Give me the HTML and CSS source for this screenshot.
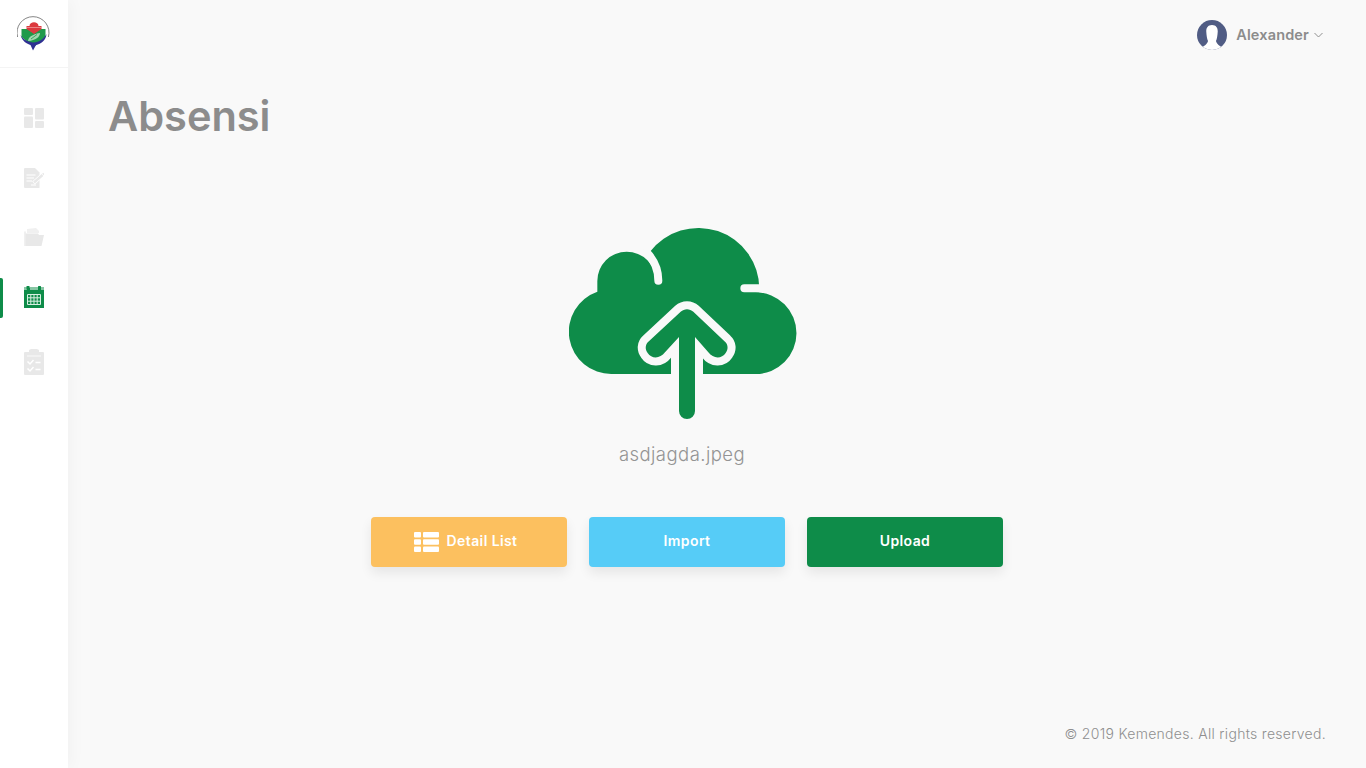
FILE: index.html
```html
<!DOCTYPE html>
<html>

<head>
	<title>Absensi</title>
	<link rel="stylesheet" href="styles.css">
</head>

<body>
	<aside class="sidebar">
		<div class="logo">
			<svg width="34" height="35" viewBox="0 0 34 35">
				<path d="M.6 21A16 16 0 1 1 31.400 21" fill="none" stroke="#666" stroke-width=".8"/>
				<path d="M4.500 13H28.500V21L17 31L4.500 21Z" fill="#1f9a4b"/>
				<path d="M9.500 13V10H12.500C12.500 5 21.500 5 21.500 10H24.500V13L17 18Z" fill="#dc3a3f"/>
				<path d="M9.500 11.500H24.500" stroke="#f3b9ba" stroke-width=".6"/>
				<path d="M11 25C11.500 21 15 18.500 23 17C23 21 18.500 24.500 11 25Z" fill="#dcefdc" opacity=".7"/>
				<path d="M14 23L20 18.500" stroke="#1f9a4b" stroke-width=".8"/>
				<path d="M3.500 19C5 25 10 28 13.500 29L16 34.500L19 29C24 28 29 24.500 29.500 18C27 23 22 26 16.500 26.500C11 26 6 23.500 3.500 19Z" fill="#2f3192"/>
			</svg>
		</div>
		<nav class="menu">
			<a class="menu-item">
				<svg width="20" height="20" viewBox="0 0 20 20" fill="#e8e8e8">
					<rect width="9" height="7" rx="1"/>
					<rect y="8.500" width="9" height="11.500" rx="1"/>
					<rect x="11" width="9" height="11.500" rx="1"/>
					<rect x="11" y="13" width="9" height="7" rx="1"/>
				</svg>
			</a>
			<a class="menu-item">
				<svg width="20" height="20" viewBox="0 0 20 20">
					<path d="M1 0H11L15.500 4.500V20H1A1 1 0 0 1 0 19V1A1 1 0 0 1 1 0Z" fill="#e8e8e8"/>
					<path d="M2.500 7H11.500M2.500 10H10M2.500 13H8M7 17H12" stroke="#fff" stroke-width="1.200"/>
					<path d="M9.500 15L18.500 7" stroke="#fff" stroke-width="4"/>
					<path d="M10 14.500L18.500 7M19 6.500L20 5.500" stroke="#e8e8e8" stroke-width="2.400"/>
				</svg>
			</a>
			<a class="menu-item">
				<svg width="20" height="20" viewBox="0 0 20 20">
					<path d="M3 5V1L12 0L15 3V5Z" fill="#f0f0f0"/>
					<path d="M0 3.500H2V18H0Z" fill="#f0f0f0"/>
					<path d="M1.500 5.500H14L15 7H20L17.500 18H1.500Z" fill="#e8e8e8"/>
				</svg>
			</a>
			<a class="menu-item active">
				<svg width="20" height="24" viewBox="0 0 20 24">
					<path d="M0 1.500H20V22H0Z" fill="#0e8c49"/>
					<path d="M0 3H3M6 3H14M17 3H20" stroke="#fff" stroke-width="1.200"/>
					<rect x="2.500" width="3" height="3.500" rx=".5" fill="#0e8c49"/>
					<rect x="14" width="3" height="3.500" rx=".5" fill="#0e8c49"/>
					<path d="M3.500 8.500H16.500V18.500H3.500ZM3.500 11.800H16.500M3.500 15.200H16.500M6.800 8.500V18.500M10 8.500V18.500M13.200 8.500V18.500" fill="none" stroke="#d8efe2" stroke-width="1"/>
				</svg>
			</a>
			<a class="menu-item">
				<svg width="20" height="34" viewBox="0 -8 20 34">
					<path d="M1 3H5V1L7 0H13L15 1V3H19A1 1 0 0 1 20 4V25A1 1 0 0 1 19 26H1A1 1 0 0 1 0 25V4A1 1 0 0 1 1 3Z" fill="#e8e8e8"/>
					<path d="M3 7H17" stroke="#fff" stroke-width=".8"/>
					<path d="M3.500 12.500L6 15L9.500 11M3.500 19.500L6 22L9.500 18" fill="none" stroke="#fff" stroke-width="1.500"/>
					<path d="M11.500 13.500H16.500M11.500 20.500H16.500" stroke="#fff" stroke-width="1.500"/>
				</svg>
			</a>
		</nav>
	</aside>

	<main class="content">
		<header class="topbar">
			<svg class="avatar" width="30" height="30" viewBox="0 0 30 30">
				<defs>
					<clipPath id="AvatarClip">
						<circle cx="15" cy="15" r="15"/>
					</clipPath>
				</defs>
				<circle cx="15" cy="15" r="15" fill="#505c84"/>
				<g clip-path="url(#AvatarClip)" fill="#fff">
					<path d="M15 5C10.500 5 9 8.500 9.300 12C9.500 15.500 10 19 11 21C10.500 24 7 26 4 28L8 31H22L26 28C23 26 19.500 24 19 21C20 19 20.500 15.500 20.700 12C21 8.500 19.500 5 15 5Z"/>
				</g>
			</svg>
			<span class="username">Alexander</span>
			<svg width="9" height="6" viewBox="0 0 9 6">
				<path d="M.5 1L4.500 5L8.500 1" fill="none" stroke="#8f8f8f" stroke-width="1"/>
			</svg>
		</header>

		<h1 class="title">Absensi</h1>

		<section class="upload">
			<svg class="cloud" width="228" height="192" viewBox="57 36 684 576">
				<path d="M185 477A127 127 0 0 1 142 230V198A88 88 0 0 1 318 198L300 110A183 183 0 0 1 628 221V232H617A122.500 122.500 0 0 1 617 477Z" fill="#0e8c49"/>
				<path d="M325 197C325 165 312 135 290 112M583 220H650" fill="none" stroke="#f9f9f9" stroke-width="24" stroke-linecap="round"/>
				<path d="M387 588V366L345 412C330 432 305 432 293 414C284 402 286 388 295 380L392 290C403 280 419 280 430 290L525 380C534 388 536 402 527 414C515 432 490 432 475 412L435 366V588A24 24 0 0 1 387 588Z" fill="#0e8c49" stroke="#f9f9f9" stroke-width="48" stroke-linejoin="round" paint-order="stroke"/>
			</svg>
			<p class="filename">asdjagda.jpeg</p>
			<div class="actions">
				<button class="btn btn-detail">
					<svg width="25" height="20" viewBox="0 0 25 20" fill="#fff">
						<rect width="7" height="5.500" rx="1"/>
						<rect y="7.200" width="7" height="5.500" rx="1"/>
						<rect y="14.500" width="7" height="5.500" rx="1"/>
						<rect x="9" width="16" height="5.500" rx="1"/>
						<rect x="9" y="7.200" width="16" height="5.500" rx="1"/>
						<rect x="9" y="14.500" width="16" height="5.500" rx="1"/>
					</svg>
					Detail List
				</button>
				<button class="btn btn-import">Import</button>
				<button class="btn btn-upload">Upload</button>
			</div>
		</section>

		<footer class="copyright">© 2019 Kemendes. All rights reserved.</footer>
	</main>
</body>

</html>
```

FILE: styles.css
```css
* {
	box-sizing: border-box;
}

html,
body {
	height: 100%;
}

body {
	display: flex;
	margin: 0;
	background-color: #f9f9f9;
	font-family: Inter, "Open Sans", sans-serif;
	overflow: hidden;
}

.sidebar {
	width: 68px;
	flex-shrink: 0;
	background-color: #fff;
	box-shadow: 4px 0 14px rgba(0, 0, 0, 0.03);
}

.logo {
	display: flex;
	align-items: center;
	justify-content: center;
	height: 68px;
	border-bottom: 1px solid #f4f4f4;
}

.menu {
	display: flex;
	flex-direction: column;
	padding-top: 20px;
}

.menu-item {
	position: relative;
	display: flex;
	align-items: center;
	justify-content: center;
	height: 60px;
}

.menu-item.active::before {
	content: "";
	position: absolute;
	left: 0;
	top: 10px;
	width: 3px;
	height: 40px;
	border-radius: 0 2px 2px 0;
	background-color: #0e8c49;
}

.content {
	display: flex;
	flex-direction: column;
	flex: 1;
	padding: 0 40px 26px;
}

.topbar {
	display: flex;
	align-items: center;
	justify-content: flex-end;
	height: 70px;
	padding-right: 3px;
	color: #8c8c8c;
}

.avatar {
	margin-right: 9px;
}

.username {
	margin-right: 5px;
	padding-bottom: 2px;
	font-size: 14.500px;
	font-weight: 600;
	letter-spacing: 0.15px;
}

.title {
	margin: 0;
	font-size: 41.500px;
	font-weight: 600;
	line-height: 92px;
	color: #8c8c8c;
}

.upload {
	display: flex;
	flex-direction: column;
	align-items: center;
	padding-top: 65px;
	padding-right: 60px;
}

.cloud {
	margin-right: 8px;
}

.filename {
	margin: 22px 10px 0 0;
	font-size: 18.500px;
	font-weight: 300;
	line-height: 26px;
	letter-spacing: 0.45px;
	color: #949494;
}

.actions {
	display: flex;
	gap: 22px;
	margin-top: 50px;
}

.btn {
	display: flex;
	align-items: center;
	justify-content: center;
	gap: 8px;
	width: 196px;
	height: 50px;
	padding: 0 0 3px;
	border: none;
	border-radius: 4px;
	font: inherit;
	font-size: 14px;
	font-weight: 600;
	letter-spacing: 0.4px;
	color: #fff;
	box-shadow: 0 6px 12px rgba(0, 0, 0, 0.08);
}

.btn-detail {
	padding-right: 7px;
	background-color: #fcc05f;
}

.btn-import {
	background-color: #56ccf7;
}

.btn-upload {
	background-color: #0e8c49;
}

.btn svg {
	margin-top: 3px;
}

.copyright {
	margin-top: auto;
	font-size: 14px;
	font-weight: 300;
	letter-spacing: 0.3px;
	text-align: right;
	color: #8f8f8f;
}
```
